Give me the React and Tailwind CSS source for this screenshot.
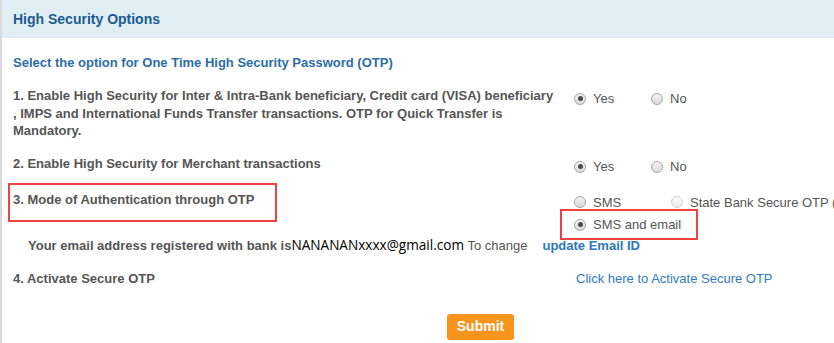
const Radio = ({ checked, disabled, label, className = "" }) => (
    <span className={`inline-flex items-center ${className}`}>
        <span
            className={`flex h-3 w-3 shrink-0 items-center justify-center rounded-full border ${
                disabled
                    ? "border-[#d4d4d4] bg-gradient-to-b from-[#fbfbfb] to-[#ececec]"
                    : "border-[#a6a6a6] bg-gradient-to-b from-[#f4f4f4] to-[#d9d9d9]"
            }`}
        >
            {checked && <span className="h-[5px] w-[5px] rounded-full bg-[#4a4a4a]" />}
        </span>
        <span className="ml-[7px] text-[13px] leading-[17.5px] text-[#555]">{label}</span>
    </span>
);

const App = () => {
    return (
        <div className="h-[343px] w-[834px] overflow-hidden border-l-2 border-[#d9d9d9] bg-white font-['Liberation_Sans',Arial,sans-serif]">
            <div className="flex h-[38px] items-center bg-[#e1eef3] px-[11px]">
                <h2 className="text-[14px] font-bold text-[#1c5b90]">High Security Options</h2>
            </div>

            <div className="px-[11px]">
                <p className="mt-[16px] text-[13px] font-bold leading-[17.5px] text-[#2b6ea6]">
                    Select the option for One Time High Security Password (OTP)
                </p>

                {/* 1 */}
                <div className="mt-[15.5px] flex">
                    <div className="w-[561px] shrink-0">
                        <p className="w-[543px] text-[13px] font-bold leading-[17.5px] text-[#555]">
                            1. Enable High Security for Inter &amp; Intra-Bank beneficiary, Credit card (VISA) beneficiary
                            , IMPS and International Funds Transfer transactions. OTP for Quick Transfer is Mandatory.
                        </p>
                    </div>
                    <div className="mt-[3px] flex h-[17.5px]">
                        <Radio checked label="Yes" className="w-[77px]" />
                        <Radio label="No" />
                    </div>
                </div>

                {/* 2 */}
                <div className="mt-[15.5px] flex">
                    <p className="w-[561px] shrink-0 text-[13px] font-bold leading-[17.5px] text-[#555]">
                        2. Enable High Security for Merchant transactions
                    </p>
                    <div className="mt-[3px] flex h-[17.5px]">
                        <Radio checked label="Yes" className="w-[77px]" />
                        <Radio label="No" />
                    </div>
                </div>

                {/* 3 */}
                <div className="mt-[7px] flex">
                    <div className="w-[561px] shrink-0">
                        <div className="-ml-[5px] h-[39px] w-[269px] border-2 border-[#f2423f] pl-[3px] pt-[6px]">
                            <p className="text-[13px] font-bold leading-[17.5px] text-[#555]">
                                3. Mode of Authentication through OTP
                            </p>
                        </div>
                    </div>
                    <div className="pt-[11px]">
                        <div className="flex h-[17.5px] whitespace-nowrap">
                            <Radio label="SMS" className="w-[97px]" />
                            <Radio disabled label="State Bank Secure OTP (" />
                        </div>
                        <div className="-ml-[14px] -mt-[2px] flex h-[31px] w-[138px] items-center border-2 border-[#f2423f] pl-[12px]">
                            <Radio checked label="SMS and email" />
                        </div>
                    </div>
                </div>

                <p className="-mt-[4px] whitespace-nowrap pl-[15px] text-[13px] leading-[17.5px] text-[#555]">
                    <span className="font-bold">Your email address registered with bank is</span>
                    <span className="font-['Open_Sans',sans-serif] text-[13.6px] text-black">NANANANxxxx@gmail.com</span>
                    <span> To change</span>
                    <a href="#" className="ml-[15px] font-bold text-[#2e76b9]">update Email ID</a>
                </p>

                {/* 4 */}
                <div className="mt-[15.5px] flex">
                    <p className="w-[563px] shrink-0 text-[13px] font-bold leading-[17.5px] text-[#555]">
                        4. Activate Secure OTP
                    </p>
                    <a href="#" className="text-[13px] leading-[17.5px] text-[#2f7bbf]">
                        Click here to Activate Secure OTP
                    </a>
                </div>

                <div className="mt-[26px] pl-[434px]">
                    <button className="h-[26px] w-[67px] rounded-[3px] bg-[#f7941d] text-[14px] font-bold text-white">
                        Submit
                    </button>
                </div>
            </div>
        </div>
    );
};

export default App;
